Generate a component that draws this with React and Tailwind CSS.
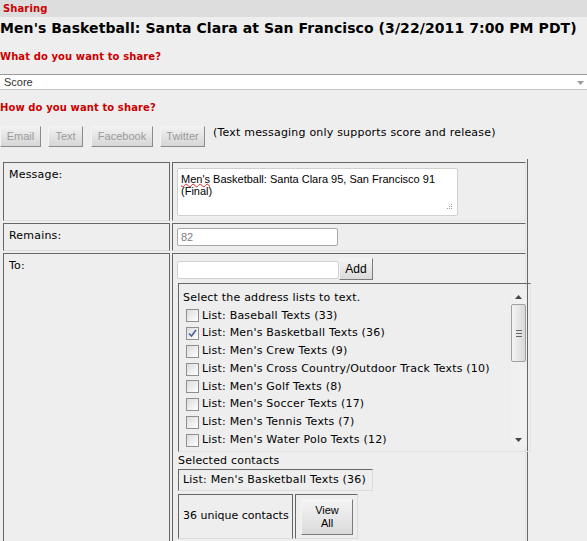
import React from "react";

const lists = [
  { name: "List: Baseball Texts (33)", checked: false },
  { name: "List: Men's Basketball Texts (36)", checked: true },
  { name: "List: Men's Crew Texts (9)", checked: false },
  { name: "List: Men's Cross Country/Outdoor Track Texts (10)", checked: false },
  { name: "List: Men's Golf Texts (8)", checked: false },
  { name: "List: Men's Soccer Texts (17)", checked: false },
  { name: "List: Men's Tennis Texts (7)", checked: false },
  { name: "List: Men's Water Polo Texts (12)", checked: false },
];

const Checkbox = ({ checked }) => (
  <span className="relative flex h-[13px] w-[13px] shrink-0 items-center justify-center border border-[#8f8f8f] bg-gradient-to-br from-[#dcdcdc] to-white">
    {checked && (
      <svg width="9" height="9" viewBox="0 0 9 9" className="absolute">
        <path d="M1 4.5 L3.5 7 L8 1" fill="none" stroke="#4a5fa8" strokeWidth="1.6" />
      </svg>
    )}
  </span>
);

const ShareButton = ({ label, width }) => (
  <button
    type="button"
    disabled
    className={`h-[21px] shrink-0 border border-t-[#f4f4f4] border-l-[#f4f4f4] border-r-[#8a8a8a] border-b-[#8a8a8a] bg-gradient-to-b from-[#f2f2f2] to-[#d6d6d6] font-['Liberation_Sans',sans-serif] text-[11px] tracking-normal text-[#9a9a9a] ${width}`}
  >
    {label}
  </button>
);

const App = () => {
  return (
    <div className="min-h-[541px] overflow-hidden bg-[#eeeeee] font-['DejaVu_Sans',sans-serif] text-[11px] tracking-[0.2px] text-black">
      <div className="h-[17px] bg-[#dddddd] pl-[3px] pt-[2px] text-[10px] font-bold leading-[13px] tracking-[0.1px] text-[#cc0000]">
        Sharing
      </div>
      <h1 className="whitespace-nowrap text-[14px] font-bold leading-[22px] tracking-[0.08px]">
        Men's Basketball: Santa Clara at San Francisco (3/22/2011 7:00 PM PDT)
      </h1>

      <div className="mt-[11px] text-[10px] font-bold leading-[14px] tracking-[0.1px] text-[#cc0000]">
        What do you want to share?
      </div>
      <div className="relative mt-[10px] flex h-[16px] items-center border-t border-b border-t-[#9a9a9a] border-b-[#c8c8c8] bg-white pl-[4px] font-['Liberation_Sans',sans-serif] text-[11px] tracking-normal text-[#333]">
        Score
        <svg width="7" height="4" viewBox="0 0 7 4" className="absolute right-[3px] top-[6px]">
          <path d="M0 0 L7 0 L3.5 4 Z" fill="#9a9a9a" />
        </svg>
      </div>

      <div className="mt-[11px] text-[10px] font-bold leading-[14px] tracking-[0.1px] text-[#cc0000]">
        How do you want to share?
      </div>
      <div className="mt-[11px] flex items-center">
        <ShareButton label="Email" width="w-[41px]" />
        <span className="w-[7px]" />
        <ShareButton label="Text" width="w-[35px]" />
        <span className="w-[8px]" />
        <ShareButton label="Facebook" width="w-[62px]" />
        <span className="w-[7px]" />
        <ShareButton label="Twitter" width="w-[45px]" />
        <span className="ml-[8px] -mt-[6px] whitespace-nowrap">(Text messaging only supports score and release)</span>
      </div>

      <div className="mt-[12px] flex w-[528px] flex-col gap-[2px] border-r border-[#666] pl-[3px] pr-[1px] pt-[3px]">
        {/* message */}
        <div className="flex h-[59px] gap-[2px]">
          <div className="w-[167px] shrink-0 border border-[#666] border-b-[#dcdcdc] pl-[5px] pt-[5px] leading-[13px]">
            Message:
          </div>
          <div className="min-w-0 flex-1 border border-t-[#666] border-l-[#666] border-r-[#e2e2e2] border-b-[#e2e2e2] pl-[4px] pt-[5px]">
            <div className="relative h-[48px] w-[281px] rounded-[2px] border border-[#d0d0d0] bg-white px-[3px] pt-[4px] font-['Liberation_Sans',sans-serif] text-[11px] leading-[12px] tracking-normal">
              <span className="underline decoration-wavy decoration-[#e02020] decoration-1 underline-offset-0">Men's</span>{" "}
              Basketball: Santa Clara 95, San Francisco 91
              <br />
              (Final)
              <svg width="7" height="7" viewBox="0 0 7 7" className="absolute bottom-[4px] right-[4px]">
                <rect x="5" y="0" width="1" height="1" fill="#999" />
                <rect x="3" y="2" width="1" height="1" fill="#999" />
                <rect x="5" y="2" width="1" height="1" fill="#999" />
                <rect x="1" y="4" width="1" height="1" fill="#999" />
                <rect x="3" y="4" width="1" height="1" fill="#999" />
                <rect x="5" y="4" width="1" height="1" fill="#999" />
              </svg>
            </div>
          </div>
        </div>

        {/* remains */}
        <div className="flex h-[28px] gap-[2px]">
          <div className="w-[167px] shrink-0 border border-[#666] border-b-[#dcdcdc] pl-[5px] pt-[5px] leading-[13px]">
            Remains:
          </div>
          <div className="min-w-0 flex-1 border border-t-[#666] border-l-[#666] border-r-[#e2e2e2] border-b-[#e2e2e2] pl-[4px] pt-[4px]">
            <div className="flex h-[18px] w-[161px] items-center rounded-[2px] border border-[#a8a8a8] bg-white pl-[3px] font-['Liberation_Sans',sans-serif] text-[11px] tracking-normal text-[#808080]">
              82
            </div>
          </div>
        </div>

        {/* to */}
        <div className="flex h-[289px] gap-[2px]">
          <div className="w-[167px] shrink-0 border border-b-0 border-[#666] pl-[5px] pt-[5px] leading-[13px]">
            To:
          </div>
          <div className="min-w-0 flex-1 border border-b-0 border-t-[#666] border-l-[#666] border-r-[#e2e2e2] pl-[4px] pt-[4px]">
            <div className="flex items-end">
              <div className="mb-[1px] h-[18px] w-[162px] shrink-0 rounded-[2px] border border-[#d0d0d0] bg-white" />
              <button
                type="button"
                className="h-[22px] w-[34px] shrink-0 border border-t-[#f4f4f4] border-l-[#f4f4f4] border-r-[#7a7a7a] border-b-[#7a7a7a] bg-gradient-to-b from-[#f4f4f4] to-[#dadada] font-['Liberation_Sans',sans-serif] text-[12px] tracking-normal text-black"
              >
                Add
              </button>
            </div>

            <div className="relative mt-[3px] ml-[1px] h-[169px] w-[353px] border border-t-[#666] border-l-[#666] border-r-[#e2e2e2] border-b-[#e2e2e2] pl-[4px] pt-[7px]">
              <div className="whitespace-nowrap leading-[14px]">Select the address lists to text.</div>
              <div className="mt-[2px] flex flex-col">
                {lists.map((l) => (
                  <div key={l.name} className="flex h-[17.75px] items-center gap-[3px] pl-[3px]">
                    <Checkbox checked={l.checked} />
                    <span className="whitespace-nowrap">{l.name}</span>
                  </div>
                ))}
              </div>

              {/* scrollbar */}
              <div className="absolute right-[4px] top-[5px] flex h-[158px] w-[15px] flex-col bg-[#f0f0f0]">
                <div className="flex h-[15px] items-center justify-center">
                  <svg width="7" height="4" viewBox="0 0 7 4">
                    <path d="M0 4 L7 4 L3.5 0 Z" fill="#444" />
                  </svg>
                </div>
                <div className="flex h-[58px] flex-col items-center justify-center gap-[2px] rounded-[2px] border border-[#a0a0a0] bg-gradient-to-r from-[#f4f4f4] to-[#d8d8d8]">
                  <span className="h-[1px] w-[6px] bg-[#666]" />
                  <span className="h-[1px] w-[6px] bg-[#666]" />
                  <span className="h-[1px] w-[6px] bg-[#666]" />
                </div>
                <div className="flex-1" />
                <div className="flex h-[15px] items-center justify-center">
                  <svg width="7" height="4" viewBox="0 0 7 4">
                    <path d="M0 0 L7 0 L3.5 4 Z" fill="#444" />
                  </svg>
                </div>
              </div>
            </div>

            <div className="mt-[2px] ml-[1px] leading-[14px]">Selected contacts</div>
            <div className="ml-[1px] mt-[1px] flex h-[22px] w-[195px] items-center whitespace-nowrap border border-t-[#666] border-l-[#666] border-r-[#dcdcdc] border-b-[#dcdcdc] pl-[4px]">
              List: Men's Basketball Texts (36)
            </div>
            <div className="ml-[1px] mt-[3px] flex gap-[2px]">
              <div className="flex h-[45px] w-[115px] shrink-0 items-center whitespace-nowrap border border-[#666] border-b-[#dcdcdc] pl-[4px] tracking-normal">
                36 unique contacts
              </div>
              <div className="flex h-[45px] w-[63px] shrink-0 items-center border border-[#666] border-r-[#dcdcdc] border-b-[#dcdcdc] pl-[5px]">
                <button
                  type="button"
                  className="h-[36px] w-[52px] border border-t-[#f4f4f4] border-l-[#f4f4f4] border-r-[#7a7a7a] border-b-[#7a7a7a] bg-gradient-to-b from-[#f4f4f4] to-[#dadada] font-['Liberation_Sans',sans-serif] text-[11px] leading-[13px] tracking-normal text-black"
                >
                  View
                  <br />
                  All
                </button>
              </div>
            </div>
          </div>
        </div>
      </div>
    </div>
  );
};

export default App;
